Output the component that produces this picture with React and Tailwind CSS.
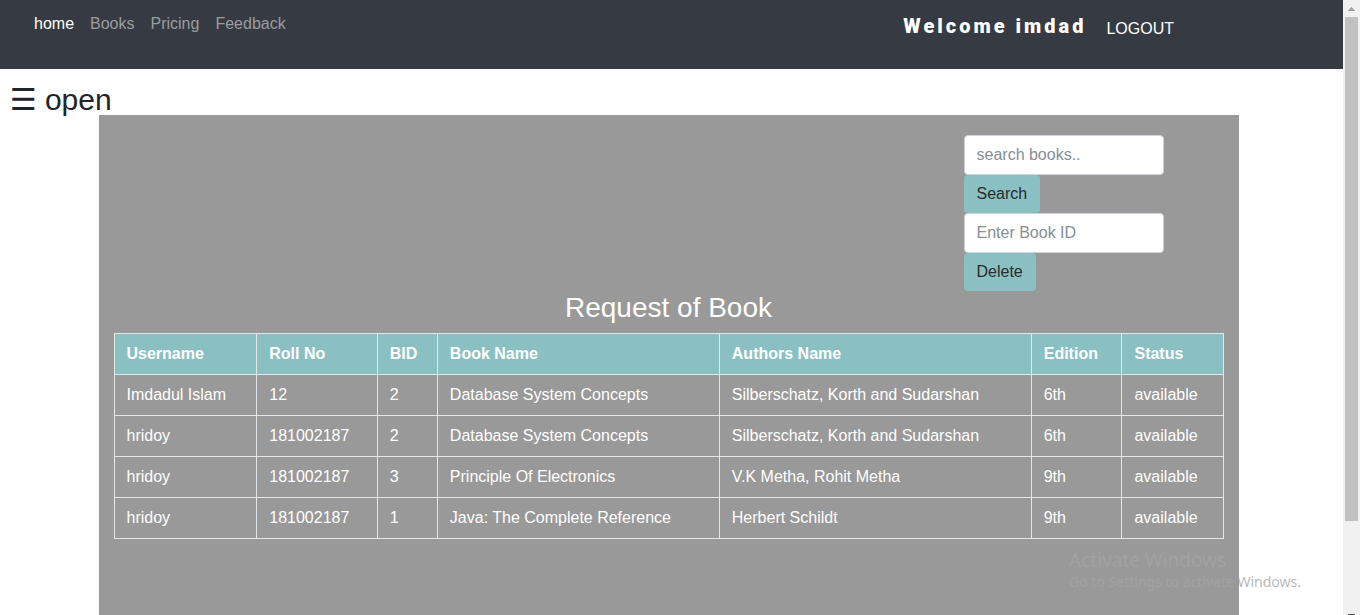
const navLinks = ["home", "Books", "Pricing", "Feedback"];

const columns = ["Username", "Roll No", "BID", "Book Name", "Authors Name", "Edition", "Status"];

const requests = [
  ["Imdadul Islam", "12", "2", "Database System Concepts", "Silberschatz, Korth and Sudarshan", "6th", "available"],
  ["hridoy", "181002187", "2", "Database System Concepts", "Silberschatz, Korth and Sudarshan", "6th", "available"],
  ["hridoy", "181002187", "3", "Principle Of Electronics", "V.K Metha, Rohit Metha", "9th", "available"],
  ["hridoy", "181002187", "1", "Java: The Complete Reference", "Herbert Schildt", "9th", "available"],
];

function Header() {
  return (
    <header className="flex h-[69px] shrink-0 items-start justify-between bg-[#363a42] pr-[169px] pl-[34px]">
      <nav className="flex gap-4 pt-3">
        {navLinks.map((label, i) => (
          <a key={label} href="#" className={i === 0 ? "text-white" : "text-[#9a9c9f]"}>
            {label}
          </a>
        ))}
      </nav>
      <div className="flex items-start gap-5 pt-3 text-white">
        <span className="font-[Impact,Roboto,sans-serif] text-[20px] leading-7 font-black tracking-[3px]">
          Welcome imdad
        </span>
        <a href="#" className="leading-[34px]">LOGOUT</a>
      </div>
    </header>
  );
}

function LookupForm({ label, placeholder, action }) {
  return (
    <form className="flex flex-col items-start" onSubmit={(e) => e.preventDefault()}>
      <input
        type="text"
        aria-label={label}
        placeholder={placeholder}
        className="h-10 w-full rounded border border-[#ced4da] bg-white px-3 text-[#495057] placeholder:text-[#868e96]"
      />
      <button type="submit" className="h-[38px] rounded bg-[#8bc0c2] px-[13px] text-[#292b2c]">
        {action}
      </button>
    </form>
  );
}

function RequestTable() {
  return (
    <table className="w-full border-collapse text-left text-white">
      <thead>
        <tr className="bg-[#8bc0c2]">
          {columns.map((c) => (
            <th key={c} scope="col" className="border border-[#e4e7ea] px-3 py-2 font-bold">{c}</th>
          ))}
        </tr>
      </thead>
      <tbody>
        {requests.map((row, r) => (
          <tr key={r}>
            {row.map((cell, c) => (
              <td key={c} className="border border-[#e4e7ea] px-3 py-2">{cell}</td>
            ))}
          </tr>
        ))}
      </tbody>
    </table>
  );
}

function ScrollTrack() {
  return (
    <div className="flex w-[17px] shrink-0 flex-col items-center bg-[#f1f1f1]" aria-hidden="true">
      <svg className="h-[17px] w-[17px] shrink-0" viewBox="0 0 17 17" fill="#a3a3a3" shapeRendering="crispEdges">
        <path d="M8 7h1v1h1v1h1v1h1v1H5v-1h1V9h1V8h1z" />
      </svg>
      <div className="h-[82%] w-[13px] bg-[#c1c1c1]" />
      <div className="mt-auto h-px w-[7px] bg-[#505050]" />
    </div>
  );
}

export default function App() {
  return (
    <div className="relative flex h-screen overflow-hidden bg-white font-['Liberation_Sans',Arial,sans-serif] text-base leading-6 text-[#212529]">
      <div className="flex min-w-0 flex-1 flex-col">
        <Header />
        <button type="button" className="flex h-[46px] shrink-0 items-center gap-2 self-start pt-4 pl-[10px] text-[30px] leading-[46px]">
          <span className="font-['DejaVu_Sans',sans-serif]">☰</span>
          <span>open</span>
        </button>
        <main className="flex flex-1 justify-center pr-1.5">
          <section className="w-full max-w-[1140px] bg-[#999] px-[15px] pt-5">
            <div className="flex justify-end pr-15">
              <div className="w-[200px]">
                <LookupForm label="Search books" placeholder="search books.." action="Search" />
                <LookupForm label="Book ID" placeholder="Enter Book ID" action="Delete" />
              </div>
            </div>
            <h2 className="mb-2 text-center text-[28px] leading-[34px] text-white">Request of Book</h2>
            <RequestTable />
          </section>
        </main>
      </div>
      <ScrollTrack />
      <div className="pointer-events-none absolute right-[59px] bottom-[23px] font-['Noto_Sans',sans-serif]">
        <p className="text-[19px] leading-6 text-[#a1a1a1]">Activate Windows</p>
        <p className="text-[14px] leading-5 text-[#a4a4a4c7]">Go to Settings to activate Windows.</p>
      </div>
    </div>
  );
}
